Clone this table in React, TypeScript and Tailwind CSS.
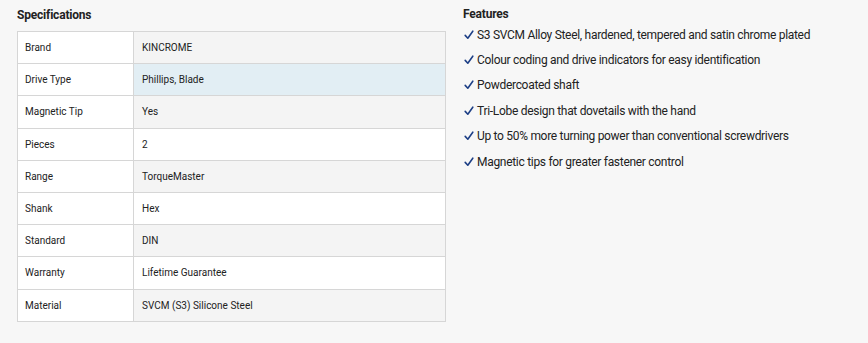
import React from 'react';

const specs: [string, string][] = [
  ['Brand', 'KINCROME'],
  ['Drive Type', 'Phillips, Blade'],
  ['Magnetic Tip', 'Yes'],
  ['Pieces', '2'],
  ['Range', 'TorqueMaster'],
  ['Shank', 'Hex'],
  ['Standard', 'DIN'],
  ['Warranty', 'Lifetime Guarantee'],
  ['Material', 'SVCM (S3) Silicone Steel'],
];

const features = [
  'S3 SVCM Alloy Steel, hardened, tempered and satin chrome plated',
  'Colour coding and drive indicators for easy identification',
  'Powdercoated shaft',
  'Tri-Lobe design that dovetails with the hand',
  'Up to 50% more turning power than conventional screwdrivers',
  'Magnetic tips for greater fastener control',
];

const Check = () => (
  <svg width="10" height="10" viewBox="0 0 10 10" className="shrink-0 mr-[3px] ml-[1px]">
    <path d="M1.2 5.4 L3.8 8.2 L8.8 1.2" fill="none" stroke="#1d3f86" strokeWidth="1.6" strokeLinecap="round" strokeLinejoin="round" />
  </svg>
);

const App: React.FC = () => {
  return (
    <div
      className="w-[868px] h-[343px] bg-[#f7f7f7] text-[#222] flex gap-[17px] pl-[17px]"
      style={{ fontFamily: 'Roboto, "Liberation Sans", sans-serif' }}
    >
      <div className="w-[429px]">
        <h3 className="text-[12px] font-bold leading-[15px] pt-[8px] mb-[8px] tracking-[-0.2px]">Specifications</h3>
        <div className="border border-[#d6d6d6] border-b-0">
          {specs.map(([label, value], i) => (
            <div key={label} className="flex h-[32.2px] border-b border-[#d6d6d6] text-[10px]">
              <div className="w-[116px] shrink-0 bg-white border-r border-[#d6d6d6] flex items-center pl-[7px]">{label}</div>
              <div
                className={`flex-1 flex items-center pl-[8px] ${
                  i === 1 ? 'bg-[#e2eef4]' : i % 2 === 0 ? 'bg-[#f4f4f4]' : 'bg-white'
                }`}
              >
                {value}
              </div>
            </div>
          ))}
        </div>
      </div>
      <div className="pt-[7px]">
        <h3 className="text-[12px] font-bold leading-[15px] tracking-[-0.2px]">Features</h3>
        <ul>
          {features.map((f) => (
            <li key={f} className="flex items-center h-[25.4px] text-[12px] tracking-[-0.3px]">
              <Check />
              <span>{f}</span>
            </li>
          ))}
        </ul>
      </div>
    </div>
  );
};

export default App;
